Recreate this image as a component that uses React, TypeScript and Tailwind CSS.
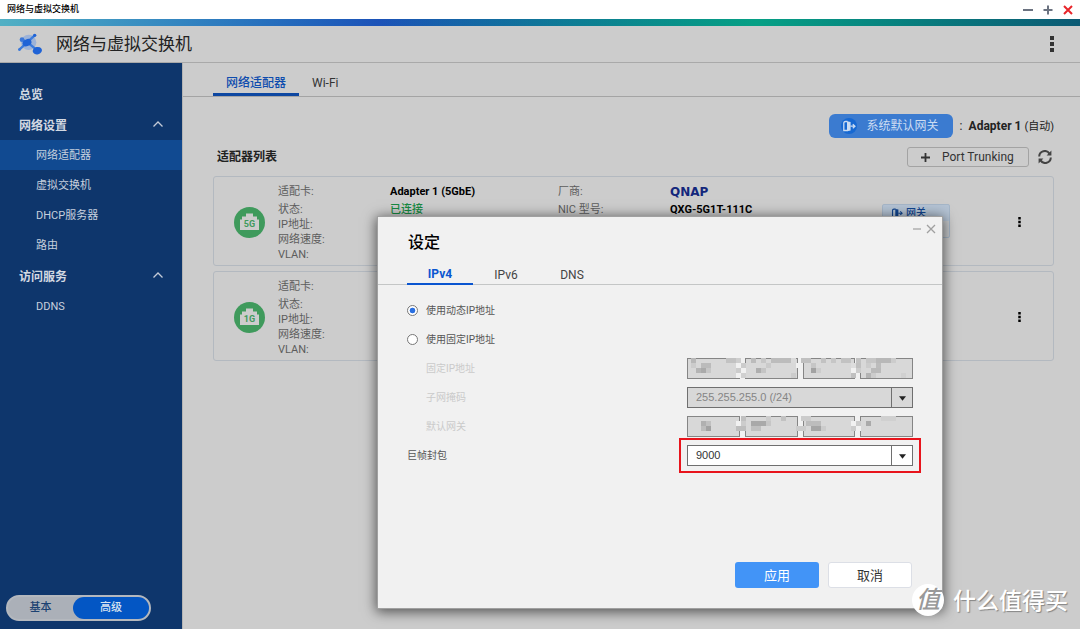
import React from "react";

function LogoIcon() {
  return (
    <svg viewBox="0 0 72 66" className="h-[22px] w-6" aria-hidden="true">
      <circle cx="32" cy="28" r="23" fill="#9db3d8" />
      <path d="M50 7 L4 50 M12 20 L28 28 L58 52" stroke="#3c7bdb" strokeWidth="7" strokeLinecap="round" fill="none" />
      <circle cx="50" cy="7" r="5" fill="#1f63d6" />
      <circle cx="12" cy="20" r="7" fill="#3b78da" />
      <circle cx="5" cy="49" r="4" fill="#3b78da" />
      <ellipse cx="27" cy="29" rx="14" ry="10" fill="#1f63d6" transform="rotate(-25 27 29)" />
      <ellipse cx="58" cy="53" rx="14" ry="11" fill="#1f63d6" transform="rotate(-15 58 53)" />
    </svg>
  );
}

function DoorIcon({ className }: { className: string }) {
  return (
    <svg viewBox="0 0 14 12" className={className} aria-hidden="true">
      <path d="M5.5 10.5H1.8V3.2Q1.8 1.5 3.5 1.5H5.5" fill="none" stroke="currentColor" strokeWidth="1.3" />
      <path d="M5 1.2L8.6 2V10.5L5 11.2Z" fill="currentColor" />
      <path d="M8.5 6.2H12.5M10.8 4.2L13 6.2L10.8 8.2" fill="none" stroke="currentColor" strokeWidth="1.2" />
    </svg>
  );
}

function Dots({ className }: { className: string }) {
  return (
    <svg viewBox="0 0 4 16" className={className} aria-hidden="true">
      <path d="M0 0h4v4H0zM0 6h4v4H0zM0 12h4v4H0z" fill="currentColor" />
    </svg>
  );
}

function PortIcon({ speed }: { speed: string }) {
  return (
    <svg viewBox="0 0 31 31" className="h-[31px] w-[31px]" role="img" aria-label={speed}>
      <circle cx="15.5" cy="15.5" r="15.5" fill="#3f9a5c" />
      <path d="M12 6.5h7v3h4v3h2v10.5H6V12.5h2v-3h4z" fill="#cccccc" />
      <text x="15.5" y="20" textAnchor="middle" fontSize="9" fontWeight="700" fill="#3f9a5c">
        {speed}
      </text>
    </svg>
  );
}

function SideGroup({ label, items, active }: { label: string; items: string[]; active?: string }) {
  return (
    <div className="mt-px">
      <button className="flex h-[30px] w-full items-center justify-between pt-0.5 pr-[19px] pl-[19px] text-xs font-bold text-[#d3d9e2]">
        {label}
        <svg viewBox="0 0 10 6" className="mb-1 h-[6px] w-[10px]" aria-hidden="true">
          <path d="M0.5 5.5L5 1L9.5 5.5" fill="none" stroke="#c3cbd8" strokeWidth="1.3" />
        </svg>
      </button>
      {items.map((item) => (
        <a
          key={item}
          href="#"
          className={
            item === active
              ? "flex h-[30px] items-center bg-[#114a91] pt-[3px] pl-9 text-[11px] text-[#c6d0de]"
              : "flex h-[30px] items-center pt-[3px] pl-9 text-[11px] text-[#c6d0de]"
          }
        >
          {item}
        </a>
      ))}
    </div>
  );
}

function AdapterCard({ speed, children }: { speed: string; children?: React.ReactNode }) {
  return (
    <article className="flex items-center rounded-[3px] border border-[#b3b9c0] pt-[5px] pb-[3px] text-[11px] leading-[15px] text-[#5c5c5c]">
      <div className="w-16 shrink-0 pl-5">
        <PortIcon speed={speed} />
      </div>
      <div className="w-28 shrink-0">
        <div className="leading-5">适配卡:</div>
        <div>状态:</div>
        <div>IP地址:</div>
        <div>网络速度:</div>
        <div>VLAN:</div>
      </div>
      <div className="flex flex-1 self-stretch">{children}</div>
      <button aria-label="更多" className="mr-8 text-black">
        <Dots className="h-[10px] w-[3px]" />
      </button>
    </article>
  );
}

type Cell = [number, number, number, string];

const addressMask: Cell[] = [
  [0, 0, 1, "#b8b8b8"], [7, 0, 2, "#c2c2c2"], [9, 0, 1, "#cecece"], [12, 0, 1, "#bbbbbb"], [14, 0, 1, "#c6c6c6"],
  [16, 0, 4, "#bcbcbc"], [20, 0, 1, "#dadada"], [22, 0, 2, "#c0c0c0"], [26, 0, 1, "#c2c2c2"], [28, 0, 1, "#c6c6c6"],
  [30, 0, 2, "#c2c2c2"], [33, 0, 1, "#c2c2c2"], [35, 0, 2, "#c6c6c6"], [37, 0, 3, "#b8b8b8"], [40, 0, 1, "#cccccc"],
  [0, 1, 1, "#cccccc"], [2, 1, 2, "#bbbbbb"], [9, 1, 1, "#f1f1f1"], [10, 1, 1, "#cccccc"], [15, 1, 1, "#cacaca"],
  [21, 1, 1, "#f1f1f1"], [24, 1, 1, "#c6c6c6"], [32, 1, 1, "#dddddd"], [33, 1, 1, "#c0c0c0"], [35, 1, 1, "#cccccc"], [37, 1, 1, "#bcbcbc"],
  [1, 2, 1, "#b4b4b4"], [2, 2, 1, "#aaaaaa"], [3, 2, 1, "#c6c6c6"], [9, 2, 1, "#cccccc"], [10, 2, 1, "#f1f1f1"],
  [13, 2, 1, "#aeaeae"], [14, 2, 1, "#c4c4c4"], [24, 2, 1, "#a2a2a2"], [25, 2, 1, "#cccccc"], [32, 2, 1, "#f1f1f1"], [33, 2, 1, "#cccccc"], [36, 2, 2, "#bababa"],
  [9, 3, 1, "#f1f1f1"], [10, 3, 1, "#d0d0d0"], [20, 3, 1, "#cccccc"], [32, 3, 1, "#c0c0c0"], [35, 3, 1, "#b4b4b4"], [36, 3, 1, "#cccccc"], [42, 3, 1, "#d0d0d0"],
];

const gatewayMask: Cell[] = [
  [10, 0, 1, "#c0c0c0"], [15, 0, 1, "#cccccc"], [18, 0, 1, "#c2c2c2"], [22, 0, 2, "#cccccc"], [38, 0, 3, "#d0d0d0"],
  [2, 1, 1, "#b0b0b0"], [3, 1, 1, "#c0c0c0"], [9, 1, 1, "#f1f1f1"], [10, 1, 1, "#cccccc"], [12, 1, 3, "#a9a9a9"], [15, 1, 1, "#c6c6c6"],
  [23, 1, 3, "#bdbdbd"], [32, 1, 1, "#f1f1f1"], [33, 1, 1, "#cccccc"], [35, 1, 1, "#aaaaaa"],
  [2, 2, 1, "#bcbcbc"], [3, 2, 1, "#a2a2a2"], [9, 2, 2, "#bebebe"], [12, 2, 2, "#c0c0c0"], [21, 2, 2, "#cccccc"],
  [24, 2, 2, "#a6a6a6"], [26, 2, 1, "#cccccc"], [32, 2, 1, "#cccccc"], [33, 2, 1, "#f1f1f1"],
];

function MaskedAddress({ label, cells }: { label: string; cells: Cell[] }) {
  return (
    <div className="relative flex w-[226px] gap-[5px]">
      {[1, 2, 3, 4].map((n) => (
        <input
          key={n}
          disabled
          aria-label={`${label} ${n}`}
          className="h-[21px] w-0 min-w-0 flex-1 border border-[#858585] bg-[#d8d8d8]"
        />
      ))}
      <svg viewBox="0 0 226 20" className="absolute top-0 left-0 h-5 w-full" aria-hidden="true">
        {cells.map(([c, r, w, fill]) => (
          <rect key={`${c}-${r}`} x={4 + c * 5} y={r * 5} width={w * 5} height={5} fill={fill} />
        ))}
      </svg>
    </div>
  );
}

function Dropdown({ id, value, disabled }: { id: string; value: string; disabled?: boolean }) {
  return (
    <div className="relative h-[21px] w-[226px]">
      <select
        id={id}
        disabled={disabled}
        className={
          disabled
            ? "block h-full w-full appearance-none border border-[#6f6f6f] bg-[#d8d8d8] pl-2 font-['Liberation_Sans',sans-serif] text-[11px] text-[#858585] opacity-100"
            : "block h-full w-full appearance-none border border-[#6f6f6f] bg-white pl-2 font-['Liberation_Sans',sans-serif] text-[11px] text-[#333]"
        }
      >
        <option>{value}</option>
      </select>
      <span className="pointer-events-none absolute inset-y-0 right-0 flex w-[22px] items-center justify-center border-l border-[#6f6f6f]">
        <svg viewBox="0 0 8 5" className="mt-[2px] h-[5px] w-[7px]" aria-hidden="true">
          <path d="M0 0h8L4 5z" fill="#222" />
        </svg>
      </span>
    </div>
  );
}

function SettingsDialog() {
  return (
    <section
      role="dialog"
      aria-label="设定"
      className="absolute top-[216px] left-[377px] w-[566px] border border-[#a0a0a0] bg-[#f1f1f1] pb-5 shadow-[0_2px_12px_1px_rgba(0,0,0,0.6)]"
    >
      <div className="absolute top-[7px] right-[6px] flex gap-1 text-[#a0a0a0]">
        <button aria-label="最小化">
          <svg viewBox="0 0 10 10" className="h-[10px] w-[10px]">
            <path d="M1 5h8" stroke="currentColor" strokeWidth="1.2" />
          </svg>
        </button>
        <button aria-label="关闭">
          <svg viewBox="0 0 10 10" className="h-[10px] w-[10px]">
            <path d="M1 1l8 8M9 1l-8 8" stroke="currentColor" strokeWidth="1.3" />
          </svg>
        </button>
      </div>
      <h2 className="pt-4 pl-[30px] text-base leading-5 font-medium text-black">设定</h2>
      <div role="tablist" className="mt-3 flex border-b border-[#c4c6c6] pl-[29px] text-xs leading-[18px] text-[#444]">
        <button role="tab" aria-selected="true" className="-mb-px w-[66px] border-b-2 border-[#0a55d0] pt-px leading-[17px] font-bold text-[#0a55d0]">IPv4</button>
        <button role="tab" aria-selected="false" className="w-[66px]">IPv6</button>
        <button role="tab" aria-selected="false" className="w-[66px]">DNS</button>
      </div>
      <form className="flex flex-col gap-2 pt-[15px] pr-[29px] pl-[29px] text-[10px] text-[#555]">
        <label className="flex h-[21px] items-center gap-2">
          <input type="radio" name="mode" defaultChecked className="h-[11px] w-[11px] appearance-none rounded-full border border-[#777] bg-white bg-radial from-[#2a6fe0] from-40% to-white to-50%" />
          使用动态IP地址
        </label>
        <label className="flex h-[21px] items-center gap-2">
          <input type="radio" name="mode" className="h-[11px] w-[11px] appearance-none rounded-full border border-[#777] bg-white" />
          使用固定IP地址
        </label>
        <div className="flex items-center justify-between pl-[19px] text-[#cacaca]">
          固定IP地址
          <MaskedAddress label="固定IP地址" cells={addressMask} />
        </div>
        <div className="flex items-center justify-between pl-[19px] text-[#cacaca]">
          <label htmlFor="mask">子网掩码</label>
          <Dropdown id="mask" value="255.255.255.0 (/24)" disabled />
        </div>
        <div className="flex items-center justify-between pl-[19px] text-[#cacaca]">
          默认网关
          <MaskedAddress label="默认网关" cells={gatewayMask} />
        </div>
        <div className="flex items-center justify-between">
          <label htmlFor="jumbo">巨帧封包</label>
          <div className="relative">
            <Dropdown id="jumbo" value="9000" />
            <span className="pointer-events-none absolute -inset-x-2 -inset-y-[7px] border-2 border-[#e8141c]" />
          </div>
        </div>
        <div className="mt-[88px] flex justify-end gap-[9px] pr-px text-[13px]">
          <button type="button" className="h-[26px] w-[84px] rounded-[3px] bg-[#4294f7] pt-0.5 text-white">应用</button>
          <button type="button" className="h-[26px] w-[84px] rounded-[3px] border border-[#dcdfe6] bg-white pt-0.5 text-[#333]">取消</button>
        </div>
      </form>
    </section>
  );
}

export default function App() {
  return (
    <div className="relative flex min-h-screen flex-col overflow-hidden bg-[#cccccc] font-[Roboto,'Noto_Sans_CJK_SC',sans-serif] text-[#222]">
      <div className="flex h-[19px] items-center justify-between bg-white pr-[7px] pl-[7px]">
        <span className="pt-px text-[9px] font-medium text-black">网络与虚拟交换机</span>
        <div className="flex gap-[10px] text-[#6b7280]">
          <button aria-label="最小化">
            <svg viewBox="0 0 10 10" className="h-[10px] w-[10px]"><path d="M0 5h10" stroke="currentColor" strokeWidth="2" /></svg>
          </button>
          <button aria-label="最大化">
            <svg viewBox="0 0 10 10" className="h-[10px] w-[10px]"><path d="M0.5 5h9M5 0.5v9" stroke="currentColor" strokeWidth="2" /></svg>
          </button>
          <button aria-label="关闭" className="text-[#e8252a]">
            <svg viewBox="0 0 10 10" className="h-[10px] w-[10px]"><path d="M1 1l8 8M9 1l-8 8" stroke="currentColor" strokeWidth="2" /></svg>
          </button>
        </div>
      </div>
      <div className="h-[7px] bg-linear-to-r from-[#52b0c4] via-[#1c52b8] via-35% to-[#0c5a74]">
        <div className="h-full bg-linear-to-r from-transparent from-35% via-[#06a085] via-70% to-[#0c5a74]" />
      </div>
      <header className="flex h-[37px] items-center border-b border-[#a9a9a9] pr-[26px] pl-[18px]">
        <LogoIcon />
        <h1 className="ml-[14px] flex-1 text-[17px] leading-6">网络与虚拟交换机</h1>
        <button aria-label="菜单" className="text-[#333]">
          <Dots className="h-4 w-[4px]" />
        </button>
      </header>
      <div className="flex flex-1">
        <nav className="flex w-[182px] shrink-0 flex-col bg-[#0e366c] pt-4">
          <a href="#" className="flex h-[30px] items-center pt-0.5 pl-[19px] text-xs font-bold text-[#d3d9e2]">总览</a>
          <SideGroup label="网络设置" active="网络适配器" items={["网络适配器", "虚拟交换机", "DHCP服务器", "路由"]} />
          <SideGroup label="访问服务" items={["DDNS"]} />
          <div className="mt-auto mb-2 ml-[6px] flex h-[26px] w-[145px] rounded-full border-2 border-[#b4b8be] bg-[#abb0b8] text-[11px] font-medium">
            <button className="flex-1 pt-px text-[#1c4272]">基本</button>
            <button className="w-[76px] rounded-full bg-[#0356c4] pt-px text-[#d8e2f0]">高级</button>
          </div>
        </nav>
        <main className="flex-1 border-l border-[#b4b4b4]">
          <div role="tablist" className="flex h-[34px] items-end border-b border-[#a4a4a4] pl-[30px] text-xs">
            <button role="tab" aria-selected="true" className="border-b-3 border-[#0d47a1] px-[13px] pb-px leading-[18px] font-medium text-[#0f4cae]">网络适配器</button>
            <button role="tab" aria-selected="false" className="px-[13px] pb-[6px] leading-[14px] text-[#333]">Wi-Fi</button>
          </div>
          <div className="pt-[17px] pr-[26px] pl-[30px]">
            <div className="flex items-center justify-end text-xs">
              <button className="flex h-6 items-center gap-[10px] rounded-md bg-[#3b7bd0] pr-[14px] pl-3 text-[#cbdcf2]">
                <span className="flex h-4 w-4 items-center justify-center rounded-full bg-[#1668d2]">
                  <DoorIcon className="h-3 w-[14px]" />
                </span>
                系统默认网关
              </button>
              <span className="ml-[7px] w-[9px]">:</span>
              <span><b>Adapter 1</b> <span className="text-[11px]">(自动)</span></span>
            </div>
            <div className="mt-[9px] flex items-center">
              <h2 className="flex-1 pl-1 text-xs font-bold">适配器列表</h2>
              <button className="flex h-5 w-[122px] items-center rounded-[3px] border border-[#a3a3a3] pl-[13px] text-xs text-[#333]">
                <svg viewBox="0 0 10 10" className="mr-[12px] h-[9px] w-[9px]" aria-hidden="true">
                  <path d="M0 5h10M5 0v10" stroke="currentColor" strokeWidth="2" />
                </svg>
                Port Trunking
              </button>
              <button aria-label="刷新" className="mr-[2px] ml-[9px] text-[#444]">
                <svg viewBox="0 0 14 14" className="h-[14px] w-[14px]" fill="none" stroke="currentColor" strokeWidth="2">
                  <path d="M1.2 6.5A5.6 5.6 0 0 1 11.5 3.6M12.8 7.5A5.6 5.6 0 0 1 2.5 10.4" />
                  <path d="M13.4 0.6V5.4H8.6zM0.6 13.4V8.6H5.4z" fill="currentColor" stroke="none" />
                </svg>
              </button>
            </div>
            <div className="mt-[9px] flex flex-col gap-[5px]">
              <AdapterCard speed="5G">
                <div className="w-[168px] font-bold">
                  <div className="leading-5 text-black">Adapter 1 (5GbE)</div>
                  <div className="font-medium text-[#178a42]">已连接</div>
                </div>
                <div className="w-28">
                  <div className="leading-5">厂商:</div>
                  <div>NIC 型号:</div>
                </div>
                <div className="w-[212px] font-bold text-black">
                  <div className="flex h-5 items-center font-['DejaVu_Sans',sans-serif] text-xs text-[#14277c]">QNAP</div>
                  <div>QXG-5G1T-111C</div>
                </div>
                <div className="mt-[22px] h-[34px] w-[68px] rounded-[2px] border border-[#a5b6c8] bg-linear-to-b from-[#b4c3d4] from-50% to-[#c6c9cc] to-50% pl-2">
                  <span className="flex items-center gap-[3px] text-[10px] font-medium text-[#12458f]">
                    <DoorIcon className="h-3 w-3" />
                    网关
                  </span>
                </div>
              </AdapterCard>
              <AdapterCard speed="1G" />
            </div>
          </div>
        </main>
      </div>
      <SettingsDialog />
      <div className="pointer-events-none absolute right-3 bottom-[11px] flex items-center gap-[9px] text-[23px] leading-8 text-white">
        <span className="flex h-8 w-8 items-center justify-center rounded-full bg-white text-[24px] font-medium text-[#999] italic">值</span>
        <span className="pt-1 font-medium [text-shadow:1px_1px_1px_rgba(0,0,0,0.35)]">什么值得买</span>
      </div>
    </div>
  );
}
